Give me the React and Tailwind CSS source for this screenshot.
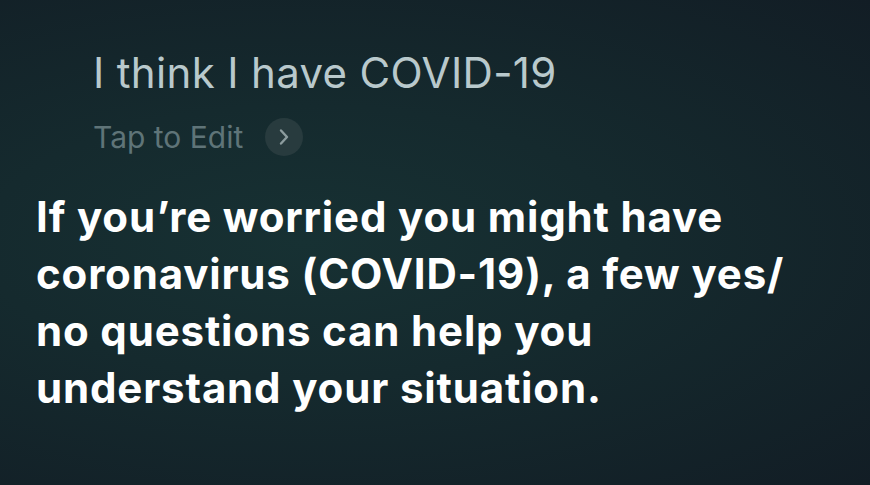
export default function App() {
  return (
    <div className="h-[485px] w-full overflow-hidden bg-[radial-gradient(ellipse_at_35%_50%,#173133_0%,#152a2e_40%,#121d25_100%)] font-['Inter',sans-serif] antialiased">
      <div className="pl-[93px] pt-[52px]">
        <p className="text-[42px] leading-none tracking-[0.008em] text-[#b9c9cc]">I think I have COVID-19</p>
        <div className="mt-[24px] flex items-center gap-[22px]">
          <span className="text-[30px] leading-none text-[#5f7478]">Tap to Edit</span>
          <span className="flex h-[38px] w-[38px] items-center justify-center rounded-full bg-[#283b3e]">
            <svg width="14" height="18" viewBox="0 0 14 18" fill="none">
              <path d="M4 2.5 L10 9 L4 15.5" stroke="#8c9c9e" strokeWidth="2.4" strokeLinecap="round" strokeLinejoin="round" />
            </svg>
          </span>
        </div>
      </div>
      <p className="mt-[32px] pl-[36px] text-[42px] font-bold leading-[57px] tracking-[0.02em] text-white">
        If you’re worried you might have
        <br />
        coronavirus (COVID-19), a few yes/
        <br />
        no questions can help you
        <br />
        understand your situation.
      </p>
    </div>
  );
}
